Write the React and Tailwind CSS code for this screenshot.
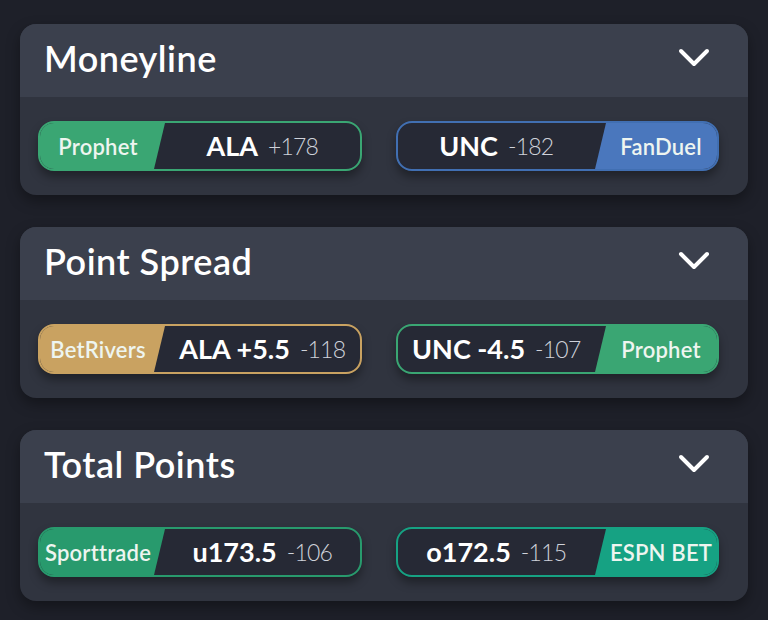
import React from "react";

const markets = [
  {
    title: "Moneyline",
    left: { book: "Prophet", color: "bg-[#3aa673]", border: "border-[#3aa673]", main: "ALA", odds: "+178" },
    right: { book: "FanDuel", color: "bg-[#4a77bd]", border: "border-[#416fb2]", main: "UNC", odds: "-182" },
  },
  {
    title: "Point Spread",
    left: { book: "BetRivers", color: "bg-[#c9a261]", border: "border-[#c9a261]", main: "ALA +5.5", odds: "-118" },
    right: { book: "Prophet", color: "bg-[#3aa673]", border: "border-[#3aa673]", main: "UNC -4.5", odds: "-107" },
  },
  {
    title: "Total Points",
    left: { book: "Sporttrade", color: "bg-[#289a6d]", border: "border-[#289a6d]", main: "u173.5", odds: "-106" },
    right: { book: "ESPN BET", color: "bg-[#16a283]", border: "border-[#16a283]", main: "o172.5", odds: "-115" },
  },
];

const Chevron = () => (
  <svg width="32" height="20" viewBox="0 0 32 20" fill="none">
    <path d="M3 3 L16 16 L29 3" stroke="#ffffff" strokeWidth="4" strokeLinecap="round" strokeLinejoin="round" />
  </svg>
);

const Odds = ({ main, odds }) => (
  <div className="flex-1 flex items-center justify-center gap-[10px] whitespace-nowrap">
    <span className="text-[27px] font-bold text-white">{main}</span>
    <span className="text-[23px] font-light text-[#cfd2da] tracking-[-0.8px]">{odds}</span>
  </div>
);

const Pill = ({ side, data }) => {
  const isLeft = side === "left";
  return (
    <div
      className={`flex-1 h-[50px] flex items-stretch rounded-[16px] border-2 ${data.border} bg-[#262935] overflow-hidden shadow-[0_6px_10px_rgba(0,0,0,0.35)]`}
    >
      {isLeft ? (
        <>
          <div
            className={`w-[125px] shrink-0 ${data.color} flex items-center pl-[3px] pr-[12px] justify-center text-[22px] font-semibold text-[#eef5f0] whitespace-nowrap tracking-[0.2px]`}
            style={{ clipPath: "polygon(0 0, 100% 0, calc(100% - 11px) 100%, 0 100%)" }}
          >
            {data.book}
          </div>
          <Odds main={data.main} odds={data.odds} />
        </>
      ) : (
        <>
          <Odds main={data.main} odds={data.odds} />
          <div
            className={`w-[122px] shrink-0 ${data.color} flex items-center justify-center pl-[10px] text-[22px] font-semibold text-[#eef5f0] whitespace-nowrap tracking-[0.2px]`}
            style={{ clipPath: "polygon(11px 0, 100% 0, 100% 100%, 0 100%)" }}
          >
            {data.book}
          </div>
        </>
      )}
    </div>
  );
};

const MarketCard = ({ market }) => (
  <div className="rounded-[16px] overflow-hidden bg-[#30343f] shadow-[0_6px_14px_rgba(0,0,0,0.35)]">
    <div className="h-[73px] bg-[#3b404d] flex items-center justify-between pl-[24px] pr-[38px] pb-[6px]">
      <h2 className="text-[36px] font-semibold text-white tracking-[0.5px]">{market.title}</h2>
      <Chevron />
    </div>
    <div className="h-[98px] flex items-center gap-[34px] pl-[18px] pr-[29px]">
      <Pill side="left" data={market.left} />
      <Pill side="right" data={market.right} />
    </div>
  </div>
);

export default function App() {
  return (
    <div
      className="w-[768px] h-[620px] bg-[#1e2029] px-[20px] pt-[24px] flex flex-col gap-[32px] overflow-hidden"
      style={{ fontFamily: "Lato, 'Open Sans', sans-serif" }}
    >
      {markets.map((m) => (
        <MarketCard key={m.title} market={m} />
      ))}
    </div>
  );
}
